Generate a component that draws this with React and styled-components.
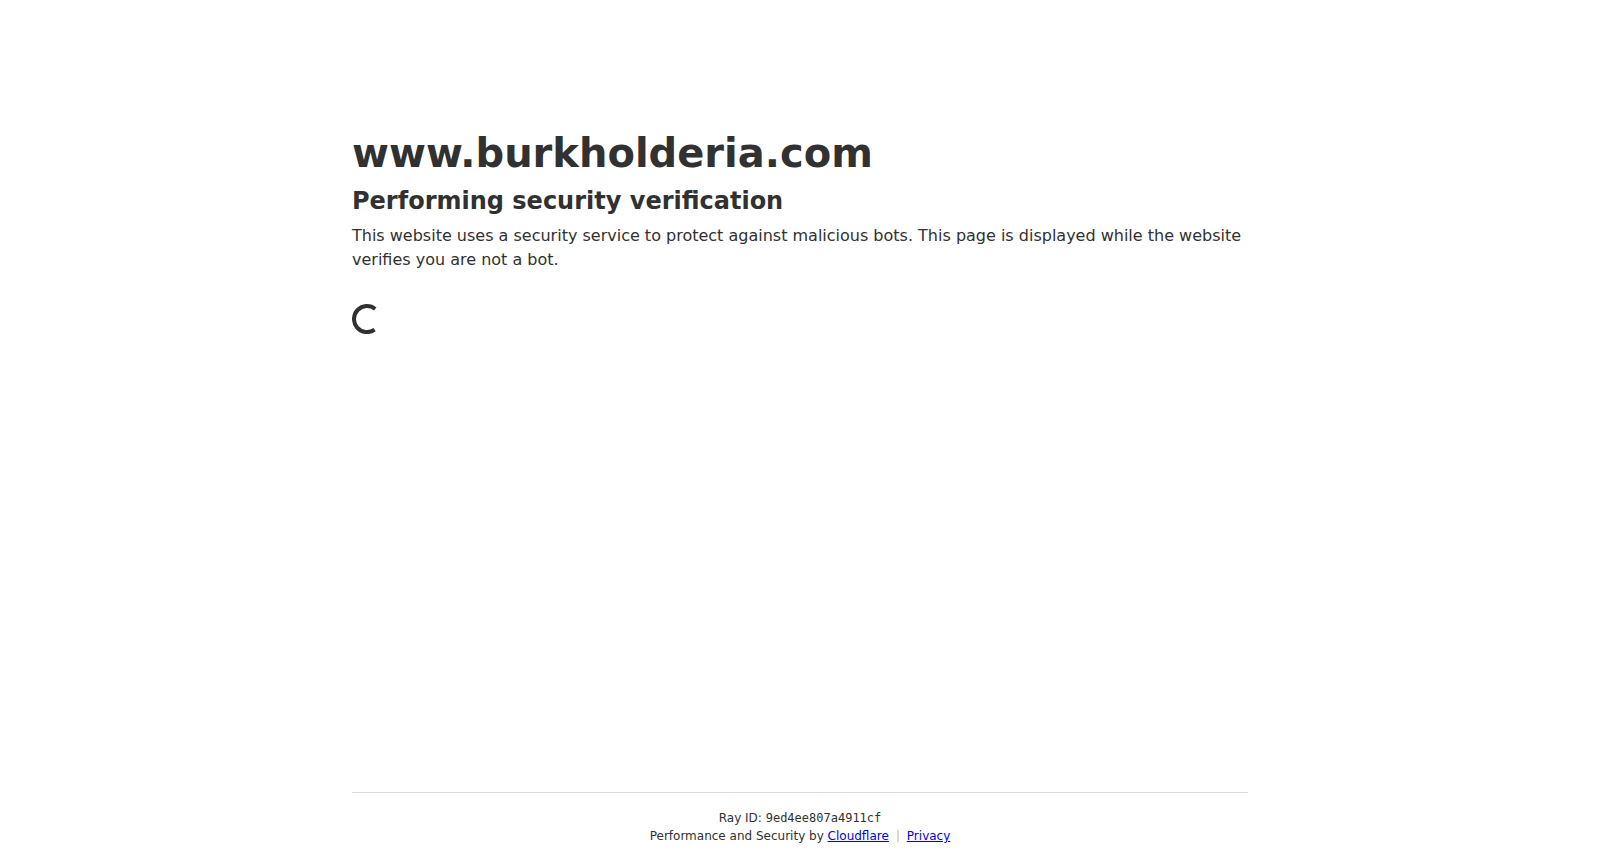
import styled, { createGlobalStyle } from 'styled-components';

const HOST = 'www.burkholderia.com';
const RAY_ID = '9ed4ee807a4911cf';

function App() {
  return (
    <>
      <GlobalStyle />
      <Page>
        <Main>
          <Host>{HOST}</Host>
          <Title>Performing security verification</Title>
          <Description>
            This website uses a security service to protect against malicious
            bots. This page is displayed while the website verifies you are not
            a bot.
          </Description>
          <Spinner viewBox='0 0 30 30' role='img' aria-label='Loading'>
            <path d='M23.2 5 A13 13 0 1 0 22.6 25.6' />
          </Spinner>
        </Main>
        <Footer>
          <FooterInner>
            <div>
              Ray ID: <RayId>{RAY_ID}</RayId>
            </div>
            <FooterRow>
              <span>
                Performance and Security by{' '}
                <FooterLink href='#cloudflare'>Cloudflare</FooterLink>
              </span>
              <PrivacyItem>
                <FooterLink href='#privacy'>Privacy</FooterLink>
              </PrivacyItem>
            </FooterRow>
          </FooterInner>
        </Footer>
      </Page>
    </>
  );
}

export default App;

const GlobalStyle = createGlobalStyle`
  * {
    box-sizing: border-box;
    margin: 0;
    padding: 0;
  }

  body {
    background-color: #fff;
    color: #313131;
    font-family: 'DejaVu Sans', sans-serif;
  }
`;

const Page = styled.div`
  display: flex;
  flex-direction: column;
  min-height: 100vh;
`;

const Main = styled.main`
  display: flex;
  flex: 1;
  flex-direction: column;
  gap: 5px;
  width: 100%;
  max-width: 960px;
  margin: 0 auto;
  padding: 128px 32px 0;
`;

const Host = styled.h1`
  font-size: 40px;
  font-weight: 700;
  line-height: 50px;
`;

const Title = styled.h2`
  font-size: 24px;
  font-weight: 700;
  line-height: 36px;
`;

const Description = styled.p`
  font-size: 16px;
  line-height: 24px;
`;

const Spinner = styled.svg`
  width: 30px;
  height: 30px;
  margin-top: 27px;
  fill: none;
  stroke: #313131;
  stroke-width: 4px;
`;

const Footer = styled.footer`
  width: 100%;
  max-width: 960px;
  margin: 0 auto;
  padding: 0 32px;
  font-size: 12px;
  line-height: 18px;
  text-align: center;
`;

const FooterInner = styled.div`
  border-top: 1px solid #d9d9d9;
  padding: 16px 0;
`;

const RayId = styled.code`
  font-family: 'DejaVu Sans Mono', monospace;
`;

const FooterRow = styled.div`
  display: flex;
  justify-content: center;
`;

const PrivacyItem = styled.span`
  display: flex;
  align-items: center;

  &::before {
    content: '';
    width: 2px;
    height: 12px;
    margin: 0 8px;
    background-color: #d9d9d9;
  }
`;

const FooterLink = styled.a`
  color: #0000ee;
`;
